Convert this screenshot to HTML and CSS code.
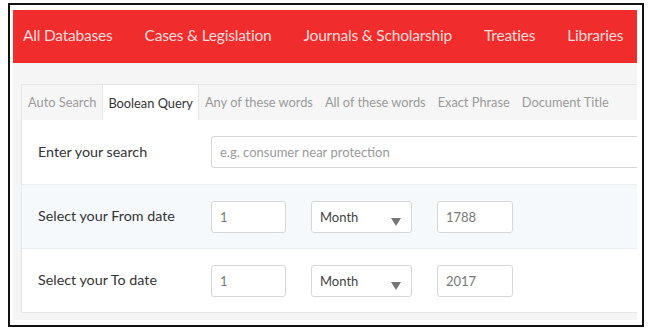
FILE: index.html
```html
<!DOCTYPE html>
<html lang="en">
<head>
    <meta charset="UTF-8">
    <title>Boolean Query</title>
    <link rel="stylesheet" href="styles.css">
</head>
<body>
    <div class="frame">
        <div class="panel">
            <nav class="main-nav">
                <a href="#">All Databases</a>
                <a href="#">Cases &amp; Legislation</a>
                <a href="#">Journals &amp; Scholarship</a>
                <a href="#">Treaties</a>
                <a href="#">Libraries</a>
            </nav>

            <div class="search-box">
                <ul class="tabs">
                    <li>Auto Search</li>
                    <li class="active">Boolean Query</li>
                    <li>Any of these words</li>
                    <li>All of these words</li>
                    <li>Exact Phrase</li>
                    <li>Document Title</li>
                </ul>

                <div class="card">
                    <div class="row">
                        <label>Enter your search</label>
                        <input type="text" class="field wide" placeholder="e.g. consumer near protection">
                    </div>
                    <div class="row shaded">
                        <label>Select your From date</label>
                        <div class="date-group">
                            <input type="text" class="field day" value="1">
                            <div class="field month">Month <span class="arrow"></span></div>
                            <input type="text" class="field year" value="1788">
                        </div>
                    </div>
                    <div class="row">
                        <label>Select your To date</label>
                        <div class="date-group">
                            <input type="text" class="field day" value="1">
                            <div class="field month">Month <span class="arrow"></span></div>
                            <input type="text" class="field year" value="2017">
                        </div>
                    </div>
                </div>
            </div>
        </div>
    </div>
</body>
</html>
```

FILE: styles.css
```css
body {
    margin: 0;
    padding: 3px 0 0 8px;
    background-color: #fff;
    font-family: 'Lato', 'Liberation Sans', sans-serif;
    color: #333;
}

.frame {
    border: 2px solid #111;
    padding: 5px 5px 0 3px;
    width: 624px;
    height: 315px;
}

.panel {
    background-color: #f5f5f5;
    height: 310px;
    overflow: hidden;
}

.main-nav {
    display: flex;
    align-items: center;
    height: 53px;
    box-sizing: border-box;
    padding: 0 0 3px 10px;
    background-color: #f02c2c;
    gap: 32px;
    white-space: nowrap;
}

.main-nav a {
    flex-shrink: 0;
    color: #fcdcdc;
    text-decoration: none;
    font-size: 15.5px;
    letter-spacing: -0.2px;
}

.search-box {
    padding: 21px 0 0 8px;
}

/* Reiter */
.tabs {
    display: flex;
    list-style: none;
    margin: 0;
    padding: 0 0 1px 0;
    height: 36px;
    border-top: 1px solid #e6e6e6;
    border-left: 1px solid #e6e6e6;
    background-color: #f6f6f6;
    box-sizing: border-box;
}

.tabs li {
    display: flex;
    align-items: center;
    padding: 0 6px;
    font-size: 12.8px;
    color: #9a9a9a;
    white-space: nowrap;
}

.tabs li.active {
    background-color: #fff;
    color: #333;
    border-left: 1px solid #e6e6e6;
    border-right: 1px solid #e6e6e6;
    margin-bottom: -1px;
    padding: 0 5px;
}

.card {
    background-color: #fff;
    border-left: 1px solid #e6e6e6;
    border-bottom: 1px solid #e6e6e6;
    margin-right: -20px;
}

.row {
    display: flex;
    align-items: center;
    height: 64px;
    padding-left: 16px;
    border-top: 1px solid #e9eef2;
    box-sizing: border-box;
}

.row:first-child {
    border-top: none;
}

.row.shaded {
    background-color: #f5f9fc;
}

.row label {
    width: 173px;
    font-size: 14.3px;
    color: #333;
    padding-bottom: 2px;
}

.field {
    height: 32px;
    box-sizing: border-box;
    border: 1px solid #d6d6d6;
    border-radius: 3px;
    background-color: #fff;
    font-family: inherit;
    font-size: 13px;
    color: #777;
    padding: 0 8px;
    outline: none;
}

.field::placeholder {
    color: #999;
}

.wide {
    flex: 1;
}

.date-group {
    display: flex;
    gap: 25px;
}

.day {
    width: 75px;
}

.month {
    width: 101px;
    display: flex;
    align-items: center;
    position: relative;
    color: #444;
}

.arrow {
    position: absolute;
    right: 10px;
    top: 16px;
    width: 0;
    height: 0;
    border-left: 5px solid transparent;
    border-right: 5px solid transparent;
    border-top: 8px solid #777;
}

.year {
    width: 76px;
}
```
